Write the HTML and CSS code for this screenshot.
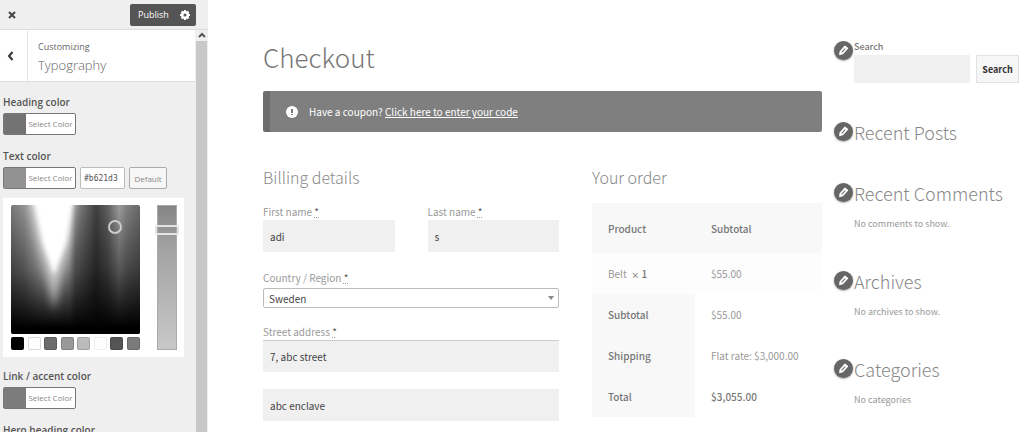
FILE: index.html
```html
<!DOCTYPE html>
<html lang="en">
<head>
  <meta charset="UTF-8" />
  <meta name="viewport" content="width=device-width, initial-scale=1.0" />
  <title>Customize: Checkout</title>
  <link rel="stylesheet" href="styles.css">
</head>

<body>
  <svg class="sprite" aria-hidden="true">
    <symbol id="pencil" viewBox="0 0 20 20">
      <path fill="currentColor" fill-rule="evenodd" d="M13.2 1.2 L18 5 Q19 6 18.2 7 L9 17 L2 18.6 L2.8 11.6 L11.4 1.7 Q12.3 0.7 13.2 1.2 Z M6 12.8 L7.4 14 L14 7 L12.6 5.8 Z" />
    </symbol>
  </svg>

  <aside class="customizer">
    <header class="customizer-header">
      <button class="close-button" aria-label="Close">
        <svg width="8" height="8" viewBox="0 0 8 8"><path d="M1 1 L7 7 M7 1 L1 7" stroke="#444" stroke-width="2" /></svg>
      </button>
      <button class="publish-button">
        Publish
        <svg width="10" height="10" viewBox="0 0 20 20">
          <circle cx="10" cy="10" r="5.5" fill="none" stroke="#fff" stroke-width="5" />
          <path d="M10 0 V4 M10 16 V20 M0 10 H4 M16 10 H20 M3 3 L6 6 M14 14 L17 17 M17 3 L14 6 M6 14 L3 17" stroke="#fff" stroke-width="4" />
        </svg>
      </button>
    </header>

    <div class="customizer-body">
      <div class="panel">
        <div class="panel-title">
          <button class="back-button" aria-label="Back">
            <svg width="7" height="10" viewBox="0 0 7 10"><path d="M5.5 1 L2 5 L5.5 9" fill="none" stroke="#333" stroke-width="2" /></svg>
          </button>
          <h3><span>Customizing</span>Typography</h3>
        </div>

        <div class="controls">
          <section class="control">
            <h4>Heading color</h4>
            <button class="color-button"><i class="heading-swatch"></i><span>Select Color</span></button>
          </section>

          <section class="control">
            <h4>Text color</h4>
            <div class="color-row">
              <button class="color-button"><i class="text-swatch"></i><span>Select Color</span></button>
              <input class="hex-input" type="text" value="#b621d3" aria-label="Text color value" />
              <button class="default-button">Default</button>
            </div>
            <div class="picker">
              <div class="picker-main">
                <svg class="picker-square" viewBox="0 0 129 129">
                  <defs>
                    <linearGradient id="hue">
                      <stop offset="0" stop-color="#777" />
                      <stop offset="0.1" stop-color="#929292" />
                      <stop offset="0.22" stop-color="#ddd" />
                      <stop offset="0.33" stop-color="#fff" />
                      <stop offset="0.45" stop-color="#ddd" />
                      <stop offset="0.5" stop-color="#888" />
                      <stop offset="0.66" stop-color="#404040" />
                      <stop offset="0.75" stop-color="#606060" />
                      <stop offset="0.84" stop-color="#9c9c9c" />
                      <stop offset="0.9" stop-color="#808080" />
                      <stop offset="1" stop-color="#686868" />
                    </linearGradient>
                    <linearGradient id="shade" x2="0" y2="1">
                      <stop offset="0" stop-color="#000" stop-opacity="0" />
                      <stop offset="0.5" stop-color="#000" stop-opacity="0.45" />
                      <stop offset="0.95" stop-color="#000" />
                    </linearGradient>
                    <filter id="soft" x="-50%" y="-50%" width="200%" height="200%"><feGaussianBlur stdDeviation="4" /></filter>
                    <filter id="crisp" x="-50%" y="-50%" width="200%" height="200%"><feGaussianBlur stdDeviation="2" /></filter>
                    <clipPath id="frame"><rect width="129" height="129" rx="2" /></clipPath>
                  </defs>
                  <g clip-path="url(#frame)">
                    <rect width="129" height="129" fill="url(#hue)" />
                    <rect width="129" height="129" fill="url(#shade)" />
                    <path d="M19 -20 L66 -20 L58 36 L43 106 L28 36 Z" fill="#fff" opacity="0.55" filter="url(#soft)" />
                    <path d="M22 -12 L62 -12 L55 38 L43 70 L32 38 Z" fill="#fff" filter="url(#crisp)" />
                  </g>
                  <circle cx="104" cy="22" r="6" fill="none" stroke="#ccc" stroke-width="2" />
                </svg>
                <div class="palette">
                  <i class="black"></i><i class="white"></i><i class="red"></i><i class="orange"></i>
                  <i class="yellow"></i><i class="light"></i><i class="blue"></i><i class="purple"></i>
                </div>
              </div>
              <div class="strip"><span class="strip-handle"></span></div>
            </div>
          </section>

          <section class="control">
            <h4>Link / accent color</h4>
            <button class="color-button"><i class="link-swatch"></i><span>Select Color</span></button>
          </section>

          <section class="control">
            <h4>Hero heading color</h4>
            <button class="color-button"><i class="heading-swatch"></i><span>Select Color</span></button>
          </section>
        </div>
      </div>
      <div class="scrollbar">
        <svg width="8" height="6" viewBox="0 0 8 6"><path d="M1 5 L4 2 L7 5" fill="none" stroke="#555" stroke-width="2" /></svg>
        <span class="thumb"></span>
      </div>
    </div>
  </aside>

  <div class="preview">
    <main class="checkout">
      <h1>Checkout</h1>

      <div class="coupon">
        <svg width="12" height="12" viewBox="0 0 12 12">
          <circle cx="6" cy="6" r="6" fill="#fff" />
          <path d="M6 3 V7 M6 8 V9" stroke="#777" stroke-width="2" />
        </svg>
        <p>Have a coupon? <a href="#">Click here to enter your code</a></p>
      </div>

      <div class="columns">
        <form class="billing">
          <h2>Billing details</h2>
          <div class="names">
            <div class="field">
              <label for="first">First name <abbr title="required">*</abbr></label>
              <input id="first" type="text" value="adi" />
            </div>
            <div class="field">
              <label for="last">Last name <abbr title="required">*</abbr></label>
              <input id="last" type="text" value="s" />
            </div>
          </div>
          <div class="field country">
            <label for="country">Country / Region <abbr title="required">*</abbr></label>
            <div class="select">
              <select id="country"><option>Sweden</option></select>
            </div>
          </div>
          <div class="field street">
            <label for="street">Street address <abbr title="required">*</abbr></label>
            <input id="street" type="text" value="7, abc street" />
          </div>
          <input type="text" value="abc enclave" aria-label="Apartment, suite, unit" />
        </form>

        <section class="order">
          <h2>Your order</h2>
          <table>
            <thead>
              <tr><th>Product</th><th>Subtotal</th></tr>
            </thead>
            <tbody>
              <tr><td>Belt&nbsp; <strong><small>×</small> 1</strong></td><td>$55.00</td></tr>
            </tbody>
            <tfoot>
              <tr><th>Subtotal</th><td>$55.00</td></tr>
              <tr><th>Shipping</th><td>Flat rate: $3,000.00</td></tr>
              <tr><th>Total</th><td><strong>$3,055.00</strong></td></tr>
            </tfoot>
          </table>
        </section>
      </div>
    </main>

    <aside class="widgets">
      <section class="widget search-widget">
        <button class="edit" aria-label="Edit search"><svg><use href="#pencil" /></svg></button>
        <form class="search">
          <label for="search">Search</label>
          <div class="search-row">
            <input id="search" type="text" />
            <button type="button">Search</button>
          </div>
        </form>
      </section>
      <section class="widget">
        <button class="edit" aria-label="Edit recent posts"><svg><use href="#pencil" /></svg></button>
        <h2>Recent Posts</h2>
      </section>
      <section class="widget">
        <button class="edit" aria-label="Edit recent comments"><svg><use href="#pencil" /></svg></button>
        <h2>Recent Comments</h2>
        <p>No comments to show.</p>
      </section>
      <section class="widget">
        <button class="edit" aria-label="Edit archives"><svg><use href="#pencil" /></svg></button>
        <h2>Archives</h2>
        <p>No archives to show.</p>
      </section>
      <section class="widget">
        <button class="edit" aria-label="Edit categories"><svg><use href="#pencil" /></svg></button>
        <h2>Categories</h2>
        <p>No categories</p>
      </section>
    </aside>
  </div>
</body>
</html>
```
FILE: styles.css
```css
* {
  box-sizing: border-box;
}

body {
  display: flex;
  height: 100vh;
  margin: 0;
  overflow: hidden;
  background: #fff;
}

h1,
h2,
h3,
h4,
p {
  margin: 0;
  font-weight: 400;
}

button,
input,
select {
  margin: 0;
  padding: 0;
  border: 0;
  border-radius: 0;
  font: inherit;
  color: inherit;
  background: none;
}

.sprite {
  position: absolute;
  width: 0;
  height: 0;
}

/* Customizer */

.customizer {
  display: flex;
  flex: 0 0 208px;
  flex-direction: column;
  background: #efefef;
  color: #555;
  font-family: "Open Sans", sans-serif;
  font-size: 9px;
}

.customizer-header {
  display: flex;
  flex: 0 0 30px;
  align-items: center;
  justify-content: space-between;
  padding-right: 12px;
  border-bottom: 1px solid #ddd;
}

.close-button {
  display: grid;
  place-items: center;
  width: 23px;
  height: 28px;
}

.publish-button {
  display: flex;
  align-items: center;
  justify-content: space-between;
  width: 66px;
  height: 22px;
  padding: 0 6px 0 8px;
  border-radius: 2px;
  background: #555;
  color: #fff;
}

.customizer-body {
  display: flex;
  flex: 1;
  min-height: 0;
}

.panel {
  flex: 1;
  overflow: hidden;
}

.panel-title {
  display: flex;
  height: 52px;
  border-bottom: 1px solid #ddd;
  background: #fff;
}

.back-button {
  display: grid;
  place-items: center;
  width: 28px;
  padding-right: 6px;
  border-right: 1px solid #e4e4e4;
}

.panel-title h3 {
  padding: 10px;
  color: #666;
  font-size: 13px;
  font-weight: 300;
  line-height: 22px;
}

.panel-title span {
  display: block;
  font-size: 9px;
  font-weight: 400;
  line-height: 14px;
}

.controls {
  padding: 11px 11px 0 3px;
}

.control {
  margin-bottom: 12px;
}

.control h4 {
  margin-bottom: 2px;
  font-size: 10px;
  font-weight: 600;
  line-height: 18px;
}

.color-row {
  display: flex;
  gap: 4px;
}

.color-button {
  display: flex;
  width: 73px;
  height: 22px;
  border: 1px solid #777;
  border-radius: 2px;
  background: #fff;
  color: #888;
  font-size: 8px;
}

.color-button i {
  width: 22px;
  height: 20px;
}

.color-button span {
  flex: 1;
  line-height: 20px;
}

.heading-swatch {
  background: #737373;
}

.text-swatch {
  background: #929292;
}

.link-swatch {
  background: #7c7c7c;
}

.hex-input {
  width: 45px;
  height: 22px;
  padding: 0 3px;
  border: 1px solid #bbb;
  border-radius: 2px;
  background: #fff;
  font-family: "DejaVu Sans Mono", monospace;
  font-size: 8px;
}

.default-button {
  width: 38px;
  height: 22px;
  border: 1px solid #aaa;
  border-radius: 2px;
  background: #f6f6f6;
  color: #888;
  font-size: 8px;
}

.picker {
  display: flex;
  justify-content: space-between;
  margin: 9px 0 -2px;
  padding: 7px 7px 7px 8px;
  background: #fff;
}

.picker-main {
  width: 129px;
}

.picker-square {
  display: block;
  width: 100%;
}

.palette {
  display: flex;
  justify-content: space-between;
  margin-top: 3px;
}

.palette i {
  width: 13px;
  height: 13px;
  border: 1px solid rgba(0, 0, 0, 0.15);
  border-radius: 2px;
}

.black {
  background: #000;
}

.white {
  background: #fff;
}

.red {
  background: #6c6c6c;
}

.orange {
  background: #999;
}

.yellow {
  background: #bbb;
}

.palette .light {
  border-color: #eee;
}

.blue {
  background: #555;
}

.purple {
  background: #7b7b7b;
}

.strip {
  position: relative;
  width: 20px;
  border: 1px solid #aaa;
  background: linear-gradient(#858585, #a3a3a3 30%, #c8c8c8);
}

.strip-handle {
  position: absolute;
  top: 19px;
  right: -3px;
  left: -3px;
  height: 10px;
  border: 2px solid #e4e4e4;
  border-radius: 2px;
}

.scrollbar {
  display: flex;
  flex: 0 0 13px;
  flex-direction: column;
  align-items: center;
  padding-top: 2px;
}

.thumb {
  flex: 1;
  width: 11px;
  margin-top: 3px;
  background: #c8c8c8;
}

/* Storefront preview */

.preview {
  display: flex;
  flex: 1;
  gap: 12px;
  padding: 41px 5px 0 55px;
  overflow: hidden;
  color: #999;
  font-family: "Noto Sans CJK SC", sans-serif;
  font-size: 10px;
}

.checkout {
  flex: 1;
}

h1 {
  color: #777;
  font-size: 26px;
  font-weight: 300;
  line-height: 32px;
}

h2 {
  color: #888;
  font-size: 16px;
  font-weight: 300;
  line-height: 24px;
}

.coupon {
  display: flex;
  gap: 11px;
  align-items: center;
  height: 41px;
  margin: 18px 0 33px;
  padding-left: 16px;
  border-left: 7px solid #6c6c6c;
  border-radius: 2px;
  background: #7f7f7f;
  color: #fff;
}

.coupon a {
  color: inherit;
}

.columns {
  display: grid;
  grid-template-columns: 296fr 230fr;
  gap: 33px;
}

.names {
  display: grid;
  grid-template-columns: 1fr 1fr;
  gap: 33px;
  margin-top: 15px;
}

label {
  display: block;
  line-height: 16px;
}

abbr {
  color: #555;
  text-decoration: underline dotted 1px #999;
}

.billing input,
.search input {
  display: block;
  width: 100%;
  height: 32px;
  padding: 0 7px;
  background: #f0f0f0;
  color: #444;
}

.country {
  margin-top: 18px;
}

.select {
  display: grid;
  align-items: center;
  margin-top: 2px;
}

.select select {
  grid-area: 1 / 1;
  height: 20px;
  padding: 0 5px;
  border: 1px solid #bbb;
  border-radius: 2px;
  appearance: none;
  color: #444;
}

.select::after {
  grid-area: 1 / 1;
  justify-self: end;
  margin-right: 5px;
  border: 3px solid transparent;
  border-top: 4px solid #888;
  border-bottom: 0;
  content: "";
  pointer-events: none;
}

.street {
  margin: 16px 0 17px;
}

.billing .street input {
  border-top: 1px solid #ccc;
}

table {
  width: 100%;
  margin-top: 14px;
  border-collapse: collapse;
  table-layout: fixed;
}

th,
td {
  height: 41px;
  padding: 0 0 0 16px;
  text-align: left;
}

th:first-child,
td:first-child {
  width: 103px;
}

th {
  background: #f8f8f8;
}

th,
strong {
  color: #777;
  font-weight: 500;
}

thead th {
  height: 50px;
}

tbody td {
  background: #fdfdfd;
}

small {
  font-size: 8px;
}

/* Widgets */

.widgets {
  display: flex;
  flex: 0 0 185px;
  flex-direction: column;
  gap: 37px;
}

.widget {
  display: grid;
  grid-template-columns: 19px 1fr;
  column-gap: 1px;
}

.widget h2 {
  font-size: 18px;
}

.widget p {
  grid-column: 2;
  margin-top: 11px;
  font-size: 9px;
  line-height: 16px;
}

.edit {
  display: grid;
  place-items: center;
  width: 19px;
  height: 19px;
  margin-top: 2px;
  border-radius: 50%;
  background: #666;
  box-shadow: 0 1px 2px #aaa;
  color: #fff;
}

.search-widget .edit {
  margin-top: 0;
}

.edit svg {
  width: 11px;
  height: 11px;
}

.search label {
  margin-bottom: 2px;
  color: #777;
  font-size: 9px;
  font-weight: 500;
  line-height: 12px;
}

.search-row {
  display: flex;
  gap: 6px;
}

.search input {
  flex: 1;
  min-width: 0;
  height: 28px;
}

.search button {
  width: 43px;
  height: 28px;
  border: 1px solid #e2e2e2;
  background: #f6f6f6;
  color: #333;
  font-size: 9px;
  font-weight: 700;
}
```
